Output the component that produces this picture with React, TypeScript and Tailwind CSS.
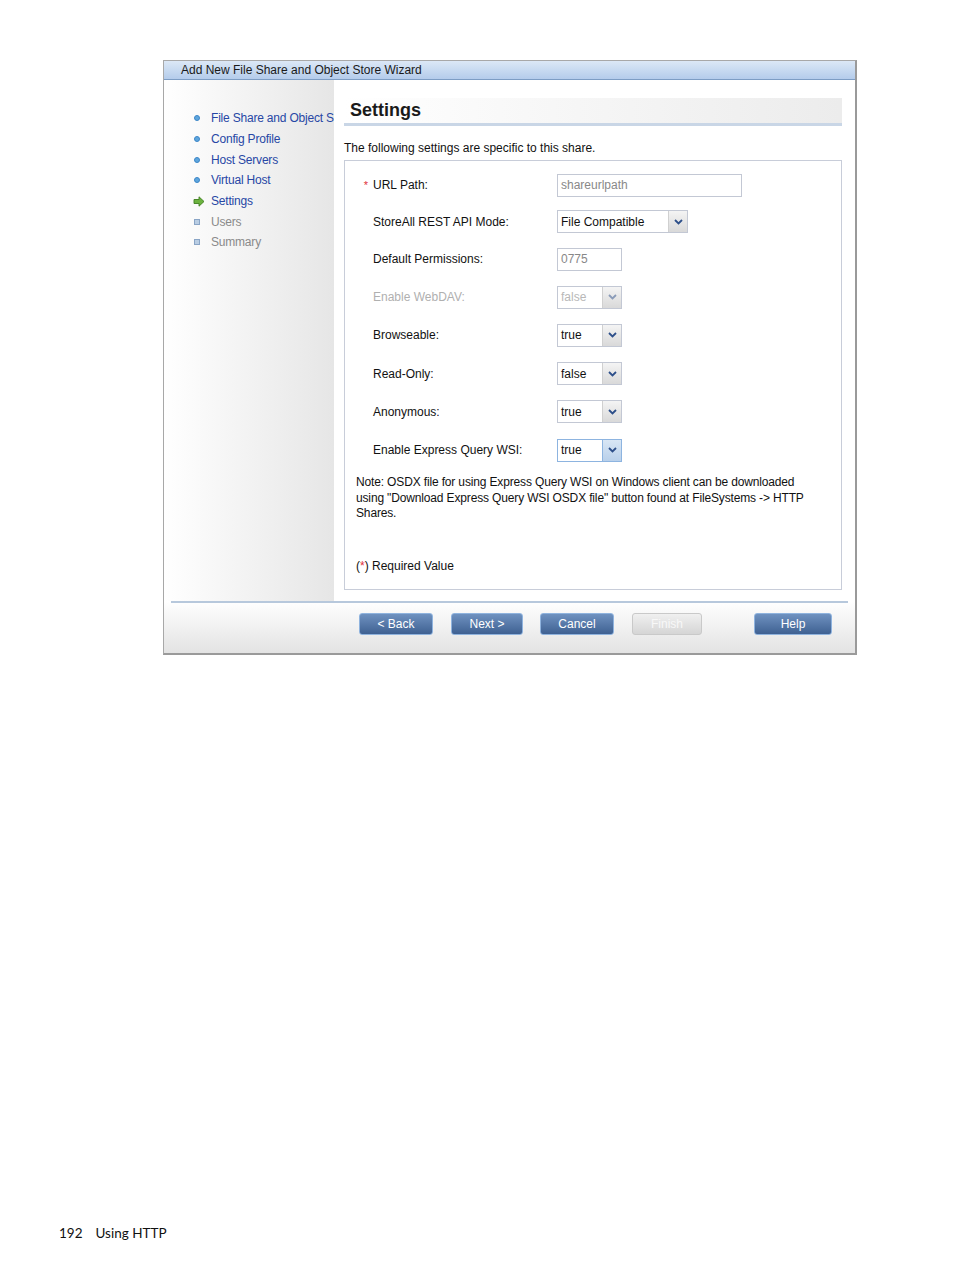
import React from 'react';

const font = { fontFamily: '"Liberation Sans", Arial, sans-serif' };

const navItems = [
  { label: 'File Share and Object S', state: 'done' },
  { label: 'Config Profile', state: 'done' },
  { label: 'Host Servers', state: 'done' },
  { label: 'Virtual Host', state: 'done' },
  { label: 'Settings', state: 'current' },
  { label: 'Users', state: 'todo' },
  { label: 'Summary', state: 'todo' },
];

const Chevron = ({ muted }: { muted?: boolean }) => (
  <svg width="9" height="6" viewBox="0 0 9 6">
    <path d="M1 1 L4.5 4.5 L8 1" fill="none" stroke={muted ? '#8a9bb8' : '#2d4f8a'} strokeWidth="1.8" />
  </svg>
);

const Select = ({ value, width, disabled, focus }: { value: string; width: string; disabled?: boolean; focus?: boolean }) => (
  <div className={`flex h-[23px] ${width} border ${focus ? 'border-[#8db4e0]' : 'border-[#c3c8d4]'} bg-white`}>
    <div className={`flex-1 flex items-center pl-[3px] text-[12px] ${disabled ? 'text-[#b8b8b8]' : 'text-[#111]'}`}>{value}</div>
    <div className={`w-[19px] flex items-center justify-center border-l ${focus ? 'border-[#8db4e0] bg-gradient-to-b from-[#d8e6f5] to-[#b9d0ea]' : 'border-[#d0d0d0] bg-gradient-to-b from-[#f4f4f4] to-[#d9d9d9]'}`}>
      <Chevron muted={disabled} />
    </div>
  </div>
);

const Input = ({ value, width }: { value: string; width: string }) => (
  <div className={`h-[23px] ${width} border border-[#c3c8d4] bg-white flex items-center pl-[3px] text-[12px] text-[#888]`}>{value}</div>
);

const Row = ({ label, children, h, disabled, required }: { label: string; children: React.ReactNode; h: string; disabled?: boolean; required?: boolean }) => (
  <div className={`flex items-center ${h}`}>
    <div className="w-[28px] flex justify-end pr-[5px]">
      {required && <span className="text-[#e0303a] text-[11px] leading-none">*</span>}
    </div>
    <div className={`w-[184px] text-[12px] ${disabled ? 'text-[#b0b0b0]' : 'text-[#111]'}`}>{label}</div>
    {children}
  </div>
);

const Btn = ({ label, w, disabled }: { label: string; w: string; disabled?: boolean }) => (
  <div
    className={`${w} h-[22px] rounded-[3px] flex items-center justify-center text-[12px] ${
      disabled
        ? 'border border-[#c9c9c9] bg-gradient-to-b from-[#f0f0f0] to-[#d5d5d5] text-[#f8f8f8]'
        : 'border border-[#8fb3de] bg-gradient-to-b from-[#6f92c0] to-[#3f6192] text-white'
    }`}
  >
    {label}
  </div>
);

export default function App() {
  return (
    <div className="w-[954px] h-[1271px] bg-white relative" style={font}>
      <div className="pt-[60px] pl-[163px]">
        <div className="w-[694px] border border-[#a8a8a8] border-r-2 border-b-2 border-r-[#9a9a9a] border-b-[#9a9a9a] bg-white">
          {/* title bar */}
          <div className="h-[19px] bg-gradient-to-b from-[#dce8f6] to-[#b4cceb] border-b border-[#7d9dc4] flex items-center pl-[17px] text-[12px] text-[#1a1a1a]">
            Add New File Share and Object Store Wizard
          </div>
          {/* body */}
          <div className="flex h-[521px]">
            <div className="w-[170px] shrink-0 bg-gradient-to-r from-white to-[#e6e6e6] pt-[28px] pl-[29px]">
              {navItems.map((n) => (
                <div key={n.label} className="flex items-center h-[20.7px] whitespace-nowrap">
                  <div className="w-[18px] shrink-0 flex items-center justify-start">
                    {n.state === 'done' && (
                      <span className="w-[6px] h-[6px] rounded-full bg-[#5ea6dd] border border-[#3b86c8] ml-[1px]" />
                    )}
                    {n.state === 'current' && (
                      <svg width="12" height="11" viewBox="0 0 12 11">
                        <path d="M1 3.5 H6 V0.8 L11 5.5 L6 10.2 V7.5 H1 Z" fill="#6cb33f" stroke="#3f7f1f" strokeWidth="0.9" />
                      </svg>
                    )}
                    {n.state === 'todo' && (
                      <span className="w-[6px] h-[6px] bg-[#b9cde3] border border-[#8aa5c6] ml-[1px]" />
                    )}
                  </div>
                  <span className={`text-[12px] tracking-[-0.2px] ${n.state === 'todo' ? 'text-[#8a8a8a]' : 'text-[#2747a5]'}`}>{n.label}</span>
                </div>
              ))}
            </div>
            <div className="flex-1 pl-[10px] pr-[13px] pt-[18px] bg-white">
              <div className="h-[28px] bg-gradient-to-r from-white to-[#ececec] border-b-[3px] border-[#c9d6e6] flex items-center pl-[6px]">
                <span className="text-[18px] text-[#1a1a1a]" style={{ fontWeight: 600 }}>Settings</span>
              </div>
              <div className="mt-[15px] text-[12px] text-[#111] leading-[14px]">The following settings are specific to this share.</div>
              <div className="mt-[5px] h-[430px] border border-[#c8cdd9] pt-[6px]">
                <Row label="URL Path:" h="h-[36px]" required>
                  <Input value="shareurlpath" width="w-[185px]" />
                </Row>
                <Row label="StoreAll REST API Mode:" h="h-[37px]">
                  <Select value="File Compatible" width="w-[131px]" />
                </Row>
                <Row label="Default Permissions:" h="h-[38.2px]">
                  <Input value="0775" width="w-[65px]" />
                </Row>
                <Row label="Enable WebDAV:" h="h-[38.2px]" disabled>
                  <Select value="false" width="w-[65px]" disabled />
                </Row>
                <Row label="Browseable:" h="h-[38.2px]">
                  <Select value="true" width="w-[65px]" />
                </Row>
                <Row label="Read-Only:" h="h-[38.2px]">
                  <Select value="false" width="w-[65px]" />
                </Row>
                <Row label="Anonymous:" h="h-[38.2px]">
                  <Select value="true" width="w-[65px]" />
                </Row>
                <Row label="Enable Express Query WSI:" h="h-[38.2px]">
                  <Select value="true" width="w-[65px]" focus />
                </Row>
                <div className="mt-[6px] pl-[11px] pr-[4px] text-[12px] leading-[15.5px] text-[#111] tracking-[-0.15px] whitespace-nowrap">
                  Note: OSDX file for using Express Query WSI on Windows client can be downloaded
                  <br />
                  using "Download Express Query WSI OSDX file" button found at FileSystems -&gt; HTTP
                  <br />
                  Shares.
                </div>
                <div className="mt-[35px] pl-[11px] text-[12px] text-[#111]">
                  (<span className="text-[#e0303a]">*</span>) Required Value
                </div>
              </div>
            </div>
          </div>
          {/* footer */}
          <div className="h-[52px] bg-gradient-to-b from-white to-[#e3e3e3] pt-[11px]">
            <div className="mx-[7px] -mt-[11px] mb-[10px] h-[2px] bg-[#b7c8dc]" />
            <div className="flex pl-[195px]">
              <Btn label="< Back" w="w-[74px]" />
              <div className="w-[18px]" />
              <Btn label="Next >" w="w-[72px]" />
              <div className="w-[17px]" />
              <Btn label="Cancel" w="w-[74px]" />
              <div className="w-[18px]" />
              <Btn label="Finish" w="w-[70px]" disabled />
              <div className="w-[52px]" />
              <Btn label="Help" w="w-[78px]" />
            </div>
          </div>
        </div>
      </div>
      <div className="absolute left-[59px] top-[1223px] text-[13.5px] text-[#111]" style={{ fontFamily: 'Lato, "Open Sans", sans-serif' }}>
        192<span className="ml-[13px]">Using HTTP</span>
      </div>
    </div>
  );
}
